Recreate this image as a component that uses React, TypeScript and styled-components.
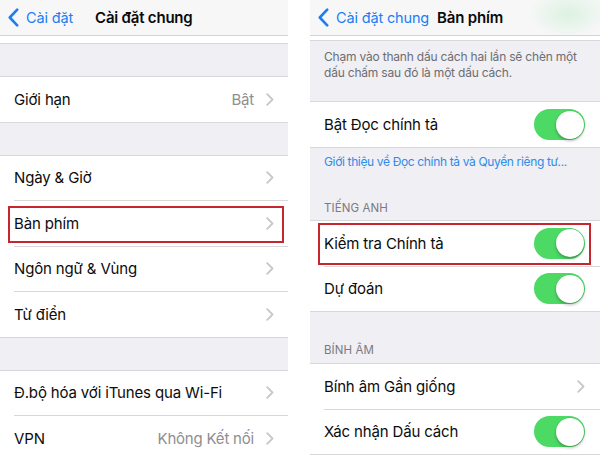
import React from 'react';
import styled, {createGlobalStyle, css} from 'styled-components';

const GlobalStyle = createGlobalStyle`
  html, body {
    margin: 0;
    padding: 0;
    background: #ffffff;
  }
  body {
    font-family: Inter, 'Liberation Sans', sans-serif;
    -webkit-font-smoothing: antialiased;
  }
`;

const SEPARATOR = '#d8d8dc';
const GROUP_BG = '#efeff4';

const Page = styled.div`
  display: flex;
  gap: 22px;
  width: 600px;
  height: 455px;
  overflow: hidden;
  background: #fff;
`;

const Screen = styled.div<{$width: number}>`
  width: ${p => p.$width}px;
  flex-shrink: 0;
  display: flex;
  flex-direction: column;
  background: ${GROUP_BG};
  overflow: hidden;
`;

const NavBar = styled.div<{$tinted?: boolean}>`
  height: 35px;
  flex-shrink: 0;
  display: flex;
  align-items: center;
  padding-left: 8px;
  background: #f7f7f8;
  border-bottom: 1px solid #d4d4d8;
  ${p =>
    p.$tinted &&
    css`
      background:
        radial-gradient(ellipse 40px 24px at 89% 40%, rgba(76, 217, 100, 0.16), rgba(76, 217, 100, 0) 100%),
        #f7f7f8;
    `}
`;

const BackLink = styled.div`
  display: flex;
  align-items: center;
  gap: 7px;
  color: #1a7ff3;
  font-size: 14.5px;
  letter-spacing: -0.15px;
  white-space: nowrap;
`;

const NavTitle = styled.div<{$offset: number}>`
  margin-left: ${p => p.$offset}px;
  font-size: 15px;
  font-weight: 600;
  color: #0a0a0a;
  letter-spacing: -0.2px;
  white-space: nowrap;
`;

const CutOff = styled.div<{$height: number}>`
  height: ${p => p.$height}px;
  flex-shrink: 0;
  background: #fff;
  border-bottom: 1px solid ${SEPARATOR};
`;

const Spacer = styled.div<{$height: number}>`
  height: ${p => p.$height}px;
  flex-shrink: 0;
`;

const Footer = styled.div<{$pad: string}>`
  flex-shrink: 0;
  padding: ${p => p.$pad};
  font-size: 12px;
  line-height: 16px;
  letter-spacing: -0.2px;
  color: #6d6d72;
  white-space: nowrap;
`;

const LinkText = styled(Footer)`
  color: #2f8be8;
  letter-spacing: -0.35px;
`;

const SectionHeader = styled(Footer)`
  text-transform: uppercase;
  font-size: 11.5px;
  letter-spacing: 0.1px;
  color: #7a7a80;
`;

const Group = styled.div`
  flex-shrink: 0;
  background: #fff;
  border-top: 1px solid ${SEPARATOR};
  border-bottom: 1px solid ${SEPARATOR};
`;

const Row = styled.div<{$height: number}>`
  position: relative;
  padding-left: 14px;

  & > div:first-child {
    min-height: ${p => p.$height}px;
  }
  &:last-child > div:first-child {
    border-bottom: none;
  }
`;

const RowInner = styled.div<{$padRight: number}>`
  display: flex;
  align-items: center;
  padding-right: ${p => p.$padRight}px;
  border-bottom: 1px solid ${SEPARATOR};
`;

const Label = styled.div`
  flex: 1;
  font-size: 15px;
  color: #0c0c0c;
  letter-spacing: -0.15px;
  white-space: nowrap;
`;

const Value = styled.div`
  font-size: 15px;
  color: #8e8e93;
  margin-right: 12px;
  letter-spacing: -0.2px;
  white-space: nowrap;
`;

const Highlight = styled.div<{$inset: string}>`
  position: absolute;
  inset: ${p => p.$inset};
  border: 2px solid #c8262f;
  pointer-events: none;
`;

const SwitchTrack = styled.div`
  width: 51px;
  height: 31px;
  border-radius: 16px;
  background: #4cd964;
  display: flex;
  align-items: center;
  justify-content: flex-end;
  padding: 0 1.5px;
  box-sizing: border-box;
`;

const SwitchKnob = styled.div`
  width: 28px;
  height: 28px;
  border-radius: 50%;
  background: #fff;
  box-shadow: 0 2px 3px rgba(0, 0, 0, 0.25), 0 0 0 0.5px rgba(0, 0, 0, 0.08);
`;

const Switch = () => (
  <SwitchTrack>
    <SwitchKnob />
  </SwitchTrack>
);

const Chevron = () => (
  <svg width="8" height="13" viewBox="0 0 8 13" fill="none">
    <path d="M1.2 1.2 L6.5 6.5 L1.2 11.8" stroke="#c7c7cc" strokeWidth="1.8" strokeLinecap="round" strokeLinejoin="round" />
  </svg>
);

const BackChevron = () => (
  <svg width="11" height="19" viewBox="0 0 11 19" fill="none">
    <path d="M9.2 1.6 L1.8 9.5 L9.2 17.4" stroke="#1a7ff3" strokeWidth="2.6" strokeLinecap="round" strokeLinejoin="round" />
  </svg>
);

type Item = {
  label: string;
  value?: string;
  accessory: 'chevron' | 'switch';
  highlight?: string;
};

const SettingsGroup: React.FC<{items: Item[]; height: number; padRight: number}> = ({items, height, padRight}) => (
  <Group>
    {items.map(item => (
      <Row key={item.label} $height={height}>
        <RowInner $padRight={padRight}>
          <Label>{item.label}</Label>
          {item.value && <Value>{item.value}</Value>}
          {item.accessory === 'chevron' ? <Chevron /> : <Switch />}
        </RowInner>
        {item.highlight && <Highlight $inset={item.highlight} />}
      </Row>
    ))}
  </Group>
);

const GeneralScreen = () => (
  <Screen $width={288}>
    <NavBar>
      <BackLink>
        <BackChevron />
        Cài đặt
      </BackLink>
      <NavTitle $offset={22}>Cài đặt chung</NavTitle>
    </NavBar>
    <CutOff $height={7} />
    <Spacer $height={32} />
    <SettingsGroup height={44.5} padRight={14} items={[{label: 'Giới hạn', value: 'Bật', accessory: 'chevron'}]} />
    <Spacer $height={32} />
    <SettingsGroup
      height={44.5}
      padRight={14}
      items={[
        {label: 'Ngày & Giờ', accessory: 'chevron'},
        {label: 'Bàn phím', accessory: 'chevron', highlight: '5px 4px 4px 8px'},
        {label: 'Ngôn ngữ & Vùng', accessory: 'chevron'},
        {label: 'Từ điển', accessory: 'chevron'},
      ]}
    />
    <Spacer $height={32} />
    <SettingsGroup
      height={44.5}
      padRight={14}
      items={[
        {label: 'Đ.bộ hóa với iTunes qua Wi-Fi', accessory: 'chevron'},
        {label: 'VPN', value: 'Không Kết nối', accessory: 'chevron'},
      ]}
    />
  </Screen>
);

const KeyboardScreen = () => (
  <Screen $width={290}>
    <NavBar $tinted>
      <BackLink>
        <BackChevron />
        Cài đặt chung
      </BackLink>
      <NavTitle $offset={8}>Bàn phím</NavTitle>
    </NavBar>
    <CutOff $height={4} />
    <Footer $pad="8px 14px 20px 14px">
      Chạm vào thanh dấu cách hai lần sẽ chèn một
      <br />
      dấu chấm sau đó là một dấu cách.
    </Footer>
    <SettingsGroup height={45} padRight={15} items={[{label: 'Bật Đọc chính tả', accessory: 'switch'}]} />
    <LinkText $pad="6px 14px 0 14px">Giới thiệu về Đọc chính tả và Quyền riêng tư...</LinkText>
    <SectionHeader $pad="30px 14px 4px 14px">Tiếng Anh</SectionHeader>
    <SettingsGroup
      height={44.5}
      padRight={15}
      items={[
        {label: 'Kiểm tra Chính tả', accessory: 'switch', highlight: '2px 9px 2px 8px'},
        {label: 'Dự đoán', accessory: 'switch'},
      ]}
    />
    <SectionHeader $pad="30px 14px 5px 14px">Bính âm</SectionHeader>
    <SettingsGroup
      height={44.5}
      padRight={15}
      items={[
        {label: 'Bính âm Gần giống', accessory: 'chevron'},
        {label: 'Xác nhận Dấu cách', accessory: 'switch'},
      ]}
    />
  </Screen>
);

export default function App() {
  return (
    <>
      <GlobalStyle />
      <Page>
        <GeneralScreen />
        <KeyboardScreen />
      </Page>
    </>
  );
}
